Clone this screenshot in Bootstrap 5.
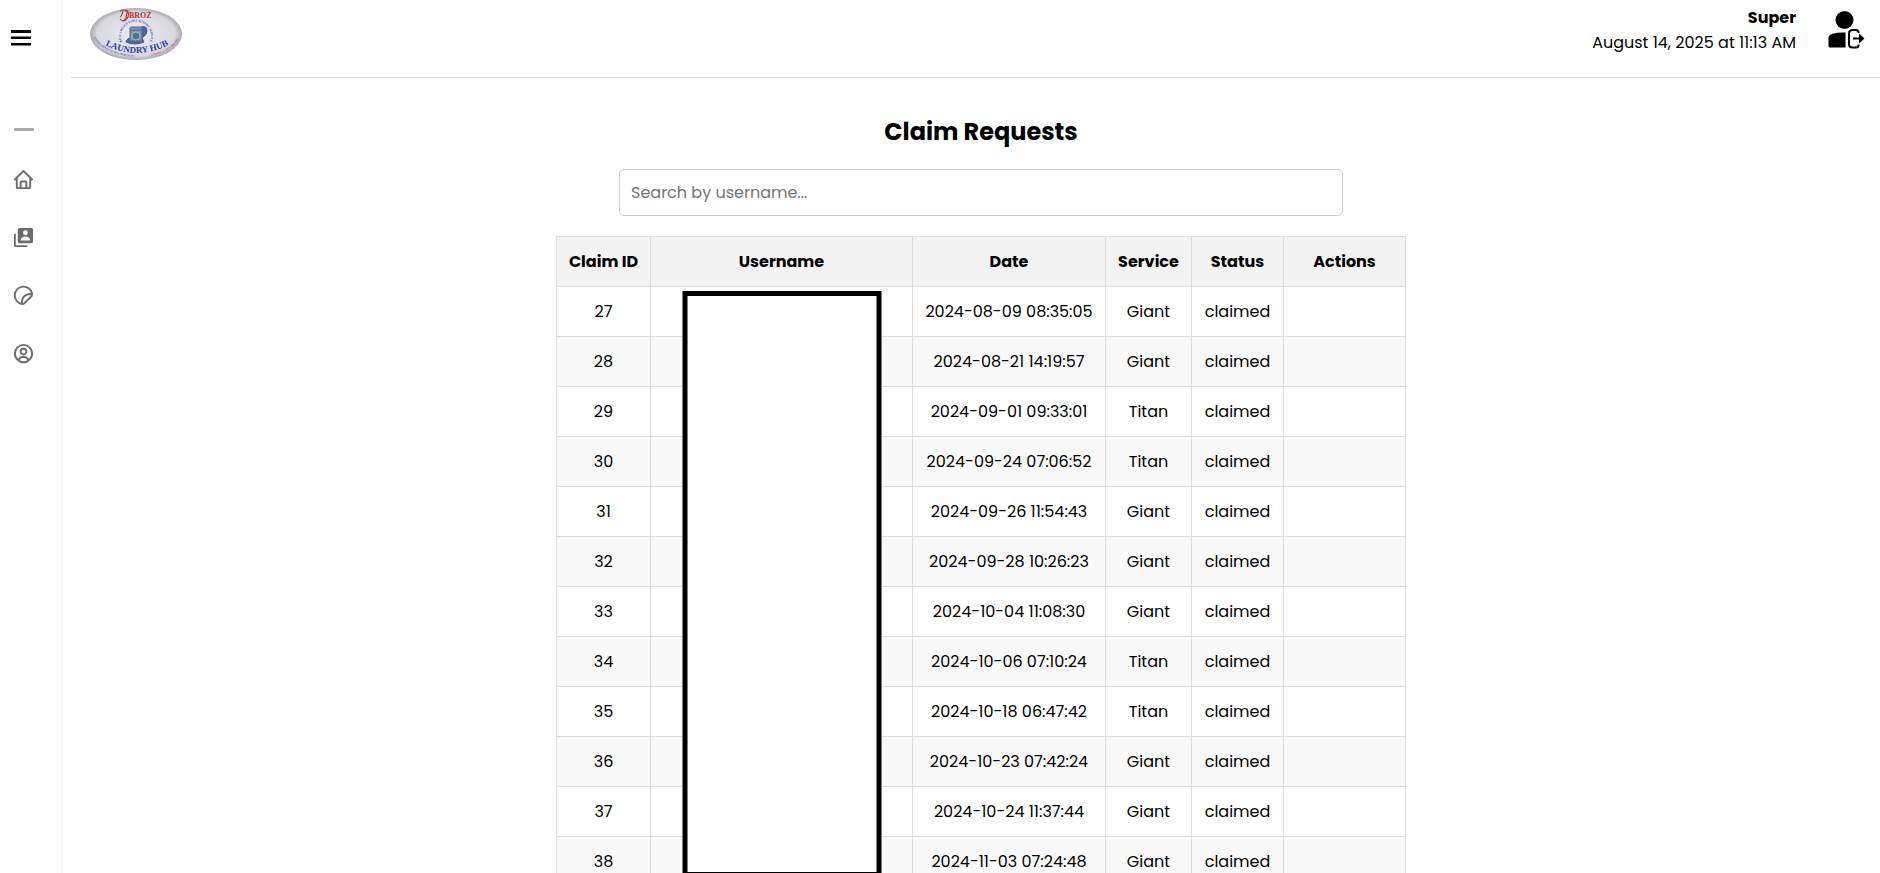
<!DOCTYPE html>
<html lang="en">
<head>
<meta charset="utf-8">
<meta name="viewport" content="width=device-width, initial-scale=1">
<title>Claim Requests</title>
<link href="https://cdn.jsdelivr.net/npm/bootstrap@5.3.0/dist/css/bootstrap.min.css" rel="stylesheet">
<style>
  body { font-family: Poppins, Inter, "Open Sans", sans-serif; font-size: 16px; color: #000; background: #fff; }
  .side-rail { width: 62px; border-right: 1px solid #f3f3f3; padding: 20px 0 0 12px; }
  .side-rail svg { display: block; }
  .menu-toggle { width: 24px; height: 35px; margin-left: -3px; }
  .rail-divider { width: 20px; height: 3px; margin: 73px 0 37px 2px; background: #a9a9a9; border: 0; opacity: 1; border-radius: 1px; }
  .rail-link { height: 58px; color: #6c6c6c; }
  .top-bar { height: 78px; margin-left: 9px; padding: 5px 14px 0 19px; border-bottom: 1px solid #ddd; }
  .who { line-height: 25px; padding-right: 30px; }
  .scroller { padding-left: 20px; scrollbar-width: none; }
  .scroller::-webkit-scrollbar { display: none; }
  .claims { width: 850px; max-width: 100%; padding-top: 36px; }
  .claims h1 { font-size: 24px; line-height: 36px; margin-bottom: 19px; }
  .search-box { width: 724px; max-width: 100%; height: 47px; padding: 10px 11px; border: 1px solid #ccc; border-radius: 5px; }
  .search-box::placeholder { color: #757575; }
  .claim-table { table-layout: fixed; margin-top: 20px; border-collapse: collapse; text-align: center; }
  .claim-table th, .claim-table td { height: 50px; padding: 0 4px; border: 1px solid #ddd; vertical-align: middle; white-space: nowrap; }
  .claim-table th { background: #f3f3f3; }
  .claim-table tbody tr:nth-child(even) { background: #f9f9f9; }
  .c-id { width: 94px; } .c-user { width: 262px; } .c-date { width: 193px; }
  .c-service { width: 86px; } .c-status { width: 92px; } .c-act { width: 122px; }
  .cover { top: 4px; width: 199px; height: 586px; border: 5px solid #000; background: #fff; z-index: 2; }
</style>
</head>
<body>
<div class="d-flex vh-100 overflow-hidden">
  <nav class="side-rail flex-shrink-0" aria-label="Main">
    <button type="button" class="menu-toggle btn p-0 border-0 d-block" aria-label="Toggle menu">
      <svg width="24" height="35" viewBox="0 0 24 35" fill="#000"><path d="M2 10h20v3H2zM2 16.500h20v2.500H2zM2 23h20v2.500H2z"/></svg>
    </button>
    <hr class="rail-divider">
    <ul class="list-unstyled m-0">
      <li class="rail-link"><a href="#" class="text-reset" aria-label="Home">
        <svg width="23" height="23" viewBox="0 0 24 24" fill="currentColor"><path d="M3 13h1v7c0 1.103.897 2 2 2h12c1.103 0 2-.897 2-2v-7h1a1 1 0 0 0 .707-1.707l-9-9a.999.999 0 0 0-1.414 0l-9 9A1 1 0 0 0 3 13zm7 7v-5h4v5h-4zm2-15.586 6 6V15l.001 5H16v-5c0-1.103-.897-2-2-2h-4c-1.103 0-2 .897-2 2v5H6v-9.586l6-6z"/></svg></a></li>
      <li class="rail-link"><a href="#" class="text-reset" aria-label="Accounts">
        <svg width="23" height="23" viewBox="0 0 24 24" fill="currentColor"><path d="M20 2H8a2 2 0 0 0-2 2v12a2 2 0 0 0 2 2h12a2 2 0 0 0 2-2V4a2 2 0 0 0-2-2zm-6 2.500a2.500 2.500 0 1 1 0 5 2.500 2.500 0 0 1 0-5zM19 15H9v-.25C9 12.901 11.254 11 14 11s5 1.901 5 3.750V15z"/><path d="M4 8H2v12c0 1.103.897 2 2 2h12v-2H4V8z"/></svg></a></li>
      <li class="rail-link"><a href="#" class="text-reset" aria-label="Claims">
        <svg width="23" height="23" viewBox="0 0 24 24" fill="none" stroke="currentColor" stroke-width="2" stroke-linejoin="round"><path d="M21 10A9.200 9.200 0 1 0 10.500 21Q12 21 13 20L20 13Q21 12 21 10zM10.500 21C9.500 14 14 9.500 21 10.500"/></svg></a></li>
      <li class="rail-link"><a href="#" class="text-reset" aria-label="Profile">
        <svg width="23" height="23" viewBox="0 0 24 24" fill="currentColor"><path d="M12 2A10.130 10.130 0 0 0 2 12a10 10 0 0 0 4 7.920V20h.1a9.700 9.700 0 0 0 11.800 0h.1v-.08A10 10 0 0 0 22 12 10.130 10.130 0 0 0 12 2zM8.070 18.930A3 3 0 0 1 11 16.570h2a3 3 0 0 1 2.930 2.360 7.750 7.750 0 0 1-7.860 0zm9.540-1.290A5 5 0 0 0 13 14.570h-2a5 5 0 0 0-4.610 3.070A8 8 0 0 1 4 12a8.100 8.100 0 0 1 8-8 8.100 8.100 0 0 1 8 8 8 8 0 0 1-2.390 5.640z"/><path d="M12 6a3.910 3.910 0 0 0-4 4 3.910 3.910 0 0 0 4 4 3.910 3.910 0 0 0 4-4 3.910 3.910 0 0 0-4-4zm0 6a1.910 1.910 0 0 1-2-2 1.910 1.910 0 0 1 2-2 1.910 1.910 0 0 1 2 2 1.910 1.910 0 0 1-2 2z"/></svg></a></li>
    </ul>
  </nav>

  <div class="flex-grow-1 d-flex flex-column overflow-hidden">
    <header class="top-bar d-flex justify-content-between align-items-start flex-shrink-0">
      <svg width="92" height="57" viewBox="0 0 92 57" role="img" aria-label="DBroz Laundry Hub">
        <defs>
          <radialGradient id="plate"><stop offset="0" stop-color="#eeedf4"/><stop offset=".85" stop-color="#d9d7e0"/><stop offset="1" stop-color="#aaa7ae"/></radialGradient>
          <path id="arcTop" d="M33 39A15 15 0 1 1 59 39"/>
          <path id="arcMid" d="M13 39Q46 57 81 39"/>
          <path id="arcLow" d="M3 32Q15 52 56 53"/>
          <path id="arcRed" d="M61 51Q82 47 90 32"/>
        </defs>
        <ellipse cx="46" cy="29" rx="46" ry="26" fill="url(#plate)"/>
        <g font-family="Liberation Serif, serif" font-weight="bold">
          <text x="39" y="13" font-size="8" fill="#b8303c">BROZ</text>
          <path d="M30 6q4-2 8 0-2 3-2 9-4 2-6-1M33 6q-1 5-3 6M35 6q5 0 3 6-1 3-4 2" fill="none" stroke="#b8303c" stroke-width="1.200"/>
          <g fill="#3441a5">
            <text font-size="3" text-anchor="middle"><textPath href="#arcTop" startOffset="50%">BEST CHOICE FOR LAUNDRY SERVICE</textPath></text>
            <text font-size="9" text-anchor="middle"><textPath href="#arcMid" startOffset="50%">LAUNDRY HUB</textPath></text>
            <text font-size="3" font-weight="normal"><textPath href="#arcLow">ALWAYS MAINTAINED IN BEAUTY</textPath></text>
          </g>
          <text font-size="3" font-weight="normal" fill="#b8303c"><textPath href="#arcRed">CONTACT: 0905-000-7054</textPath></text>
        </g>
        <path d="M51 22q6-2 6 4 0 4-5 7M36 36q3-4 5-3 6 4 11 0l2 4q-9 4-18 0z" fill="#4a6698" stroke="#4e5b91" stroke-width="1"/>
        <rect x="40" y="22" width="12" height="14" rx="1" fill="#7f94ab" stroke="#59658f"/>
        <path d="M40 25h12" stroke="#59658f"/>
        <circle cx="46" cy="31" r="4" fill="#4b7886" stroke="#a9b5c6"/>
      </svg>
      <div class="d-flex align-items-start">
        <div class="who text-end"><div class="fw-bold">Super</div><div>August 14, 2025 at 11:13 AM</div></div>
        <a href="#" aria-label="Log out">
          <svg class="d-block" width="40" height="46" viewBox="0 0 40 46"><circle cx="18.500" cy="15" r="9" fill="#000"/><path d="M2.500 41V33q0-3 4-4.200Q12 27 19.500 27.500v15H4q-1.500 0-1.500-1.500z" fill="#000"/><path d="M32.500 28v-.5q0-2.500-2.500-2.500h-3.500q-3.500 0-3.500 3.500v10.500q0 3.500 3.500 3.500H30q2.500 0 2.500-2.500V39.500" fill="none" stroke="#000" stroke-width="2"/><path d="M27 33.500h8" fill="none" stroke="#000" stroke-width="2"/><path d="M33 28.500l5.500 5-5.500 5z" fill="#000"/></svg>
        </a>
      </div>
    </header>

    <main class="scroller flex-grow-1 overflow-auto">
      <section class="claims mx-auto">
        <h1 class="text-center fw-bold">Claim Requests</h1>
        <input type="search" class="search-box d-block mx-auto" placeholder="Search by username..." aria-label="Search by username">
        <table class="claim-table w-100">
          <colgroup><col class="c-id"><col class="c-user"><col class="c-date"><col class="c-service"><col class="c-status"><col class="c-act"></colgroup>
          <thead><tr><th>Claim ID</th><th>Username</th><th>Date</th><th>Service</th><th>Status</th><th>Actions</th></tr></thead>
          <tbody>
            <tr><td>27</td><td class="position-relative"><div class="cover position-absolute start-50 translate-middle-x"></div></td><td>2024-08-09 08:35:05</td><td>Giant</td><td>claimed</td><td></td></tr>
            <tr><td>28</td><td></td><td>2024-08-21 14:19:57</td><td>Giant</td><td>claimed</td><td></td></tr>
            <tr><td>29</td><td></td><td>2024-09-01 09:33:01</td><td>Titan</td><td>claimed</td><td></td></tr>
            <tr><td>30</td><td></td><td>2024-09-24 07:06:52</td><td>Titan</td><td>claimed</td><td></td></tr>
            <tr><td>31</td><td></td><td>2024-09-26 11:54:43</td><td>Giant</td><td>claimed</td><td></td></tr>
            <tr><td>32</td><td></td><td>2024-09-28 10:26:23</td><td>Giant</td><td>claimed</td><td></td></tr>
            <tr><td>33</td><td></td><td>2024-10-04 11:08:30</td><td>Giant</td><td>claimed</td><td></td></tr>
            <tr><td>34</td><td></td><td>2024-10-06 07:10:24</td><td>Titan</td><td>claimed</td><td></td></tr>
            <tr><td>35</td><td></td><td>2024-10-18 06:47:42</td><td>Titan</td><td>claimed</td><td></td></tr>
            <tr><td>36</td><td></td><td>2024-10-23 07:42:24</td><td>Giant</td><td>claimed</td><td></td></tr>
            <tr><td>37</td><td></td><td>2024-10-24 11:37:44</td><td>Giant</td><td>claimed</td><td></td></tr>
            <tr><td>38</td><td></td><td>2024-11-03 07:24:48</td><td>Giant</td><td>claimed</td><td></td></tr>
          </tbody>
        </table>
      </section>
    </main>
  </div>
</div>
<script src="https://cdn.jsdelivr.net/npm/bootstrap@5.3.0/dist/js/bootstrap.bundle.min.js"></script>
</body>
</html>
